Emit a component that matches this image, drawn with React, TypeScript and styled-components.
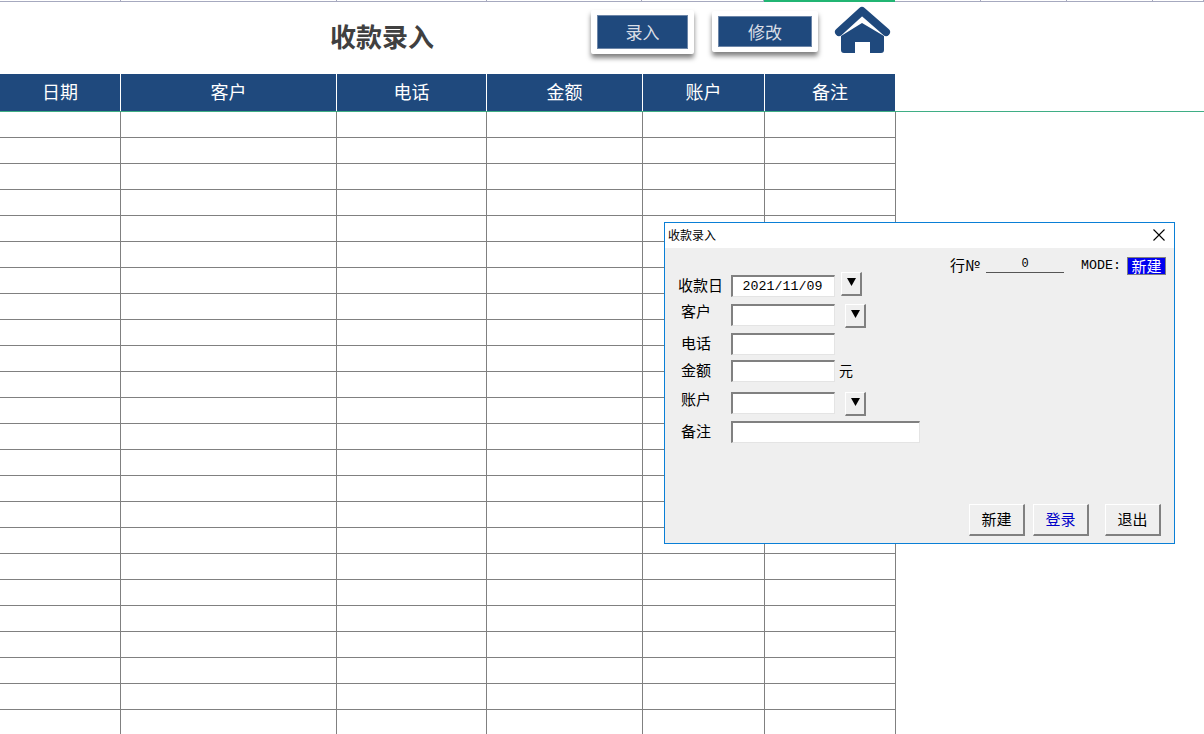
import styled, { createGlobalStyle } from "styled-components";

const UI_FONT = `"Noto Sans CJK SC", "Liberation Sans", sans-serif`;
const MONO_FONT = `"Liberation Mono", "Noto Sans CJK SC", monospace`;

const columns = [
    { title: "日期", width: 121 },
    { title: "客户", width: 216 },
    { title: "电话", width: 150 },
    { title: "金额", width: 156 },
    { title: "账户", width: 122 },
    { title: "备注", width: 131 },
];
const stripExtra = [86, 86, 86, 51];
const rowCount = 24;

const GlobalStyle = createGlobalStyle`
    html, body {
        margin: 0;
        padding: 0;
        background: #fff;
        overflow: hidden;
    }
`;

function HomeIcon() {
    return (
        <svg width="60" height="50" viewBox="0 0 60 50" fill="#1f497d">
            <path d="M7 27 L30 6 L54 27" fill="none" stroke="#1f497d" strokeWidth="8" strokeLinecap="round" strokeLinejoin="round" />
            <path d="M9 31 L30 18 L52 31 V45 Q52 48 49 48 H38 V37 H23 V48 H12 Q9 48 9 45 Z" />
        </svg>
    );
}

function DropButton() {
    return (
        <Arrow>
            <svg width="9" height="8" viewBox="0 0 9 8">
                <path d="M0 0 H9 L4.5 8 Z" fill="#000" />
            </svg>
        </Arrow>
    );
}

export default function App() {
    return (
        <Page>
            <GlobalStyle />
            <TopStrip>
                {columns.map((col) => (
                    <StripCell key={col.title} $width={col.width} $active={col.title === "备注"} />
                ))}
                {stripExtra.map((w, i) => (
                    <StripCell key={i} $width={w} />
                ))}
            </TopStrip>

            <TitleBar>
                <PageTitle>收款录入</PageTitle>
                <ShadowButton $width={103} $height={44} $margin={158} $top={8}>录入</ShadowButton>
                <ShadowButton $width={106} $height={41} $margin={18} $top={9}>修改</ShadowButton>
                <HomeLink><HomeIcon /></HomeLink>
            </TitleBar>

            <HeaderRow>
                {columns.map((col) => (
                    <HeaderCell key={col.title} $width={col.width}>{col.title}</HeaderCell>
                ))}
            </HeaderRow>

            {Array.from({ length: rowCount }).map((_, i) => (
                <DataRow key={i}>
                    {columns.map((col) => (
                        <DataCell key={col.title} $width={col.width} />
                    ))}
                </DataRow>
            ))}

            <Dialog>
                <DialogTitle>
                    <span>收款录入</span>
                    <svg width="12" height="12" viewBox="0 0 12 12">
                        <path d="M0.5 0.5 L11.5 11.5 M11.5 0.5 L0.5 11.5" stroke="#000" strokeWidth="1.1" />
                    </svg>
                </DialogTitle>
                <DialogBody>
                    <StatusRow>
                        <StatusLabel>行№</StatusLabel>
                        <RowNumber>0</RowNumber>
                        <ModeLabel>MODE:</ModeLabel>
                        <ModeBadge>新建</ModeBadge>
                    </StatusRow>

                    <FormRow>
                        <FieldLabel $indent={0} $top={2}>收款日</FieldLabel>
                        <Field $mt={3} $width={104}>2021/11/09</Field>
                        <ArrowSlot $ml={6}><DropButton /></ArrowSlot>
                    </FormRow>
                    <FormRow $mt={7}>
                        <FieldLabel $indent={3} $top={-4}>客户</FieldLabel>
                        <Field $width={104} />
                        <ArrowSlot $ml={10}><DropButton /></ArrowSlot>
                    </FormRow>
                    <FormRow $mt={5}>
                        <FieldLabel $indent={3} $top={-1}>电话</FieldLabel>
                        <Field $width={104} />
                    </FormRow>
                    <FormRow $mt={5}>
                        <FieldLabel $indent={3} $top={-1}>金额</FieldLabel>
                        <Field $width={104} />
                        <Unit>元</Unit>
                    </FormRow>
                    <FormRow $mt={10}>
                        <FieldLabel $indent={3} $top={-4}>账户</FieldLabel>
                        <Field $width={104} />
                        <ArrowSlot $ml={10}><DropButton /></ArrowSlot>
                    </FormRow>
                    <FormRow $mt={5}>
                        <FieldLabel $indent={3} $top={-1}>备注</FieldLabel>
                        <Field $width={189} />
                    </FormRow>

                    <DialogFooter>
                        <BevelButton>新建</BevelButton>
                        <BevelButton $blue>登录</BevelButton>
                        <BevelButton $ml={8}>退出</BevelButton>
                    </DialogFooter>
                </DialogBody>
            </Dialog>
        </Page>
    );
}

const Page = styled.div`
    position: relative;
    width: 1204px;
    height: 734px;
    overflow: hidden;
    background: #fff;
    font-family: ${UI_FONT};
`;

const TopStrip = styled.div`
    display: flex;
    height: 2px;
`;

const StripCell = styled.div<{ $width: number; $active?: boolean }>`
    box-sizing: border-box;
    width: ${({ $width }) => $width}px;
    height: 2px;
    border-right: 1px solid ${({ $active }) => ($active ? "#21b573" : "#a6a9bf")};
    background: ${({ $active }) =>
        $active ? "#21b573" : "linear-gradient(transparent 1px, #a6a9bf 1px)"};
`;

const TitleBar = styled.div`
    display: flex;
    align-items: flex-start;
    height: 72px;
    box-sizing: border-box;
    padding: 0 0 0 330px;
`;

const PageTitle = styled.h1`
    margin: 17px 0 0;
    width: 103px;
    font-size: 26px;
    line-height: 34px;
    font-weight: 700;
    color: #404040;
    white-space: nowrap;
`;

const ShadowButton = styled.button<{ $width: number; $height: number; $margin: number; $top: number }>`
    box-sizing: border-box;
    width: ${({ $width }) => $width}px;
    height: ${({ $height }) => $height}px;
    margin: ${({ $top }) => $top}px 0 0 ${({ $margin }) => $margin}px;
    padding: 0 0 1px;
    border-style: solid;
    border-color: #fff;
    border-width: 5px 6px;
    border-radius: 2px;
    background: #1f497d;
    box-shadow: inset 0 0 0 1px #6d86a8, 0 4px 5px rgba(0, 0, 0, 0.5);
    color: #d9dee6;
    font-family: ${UI_FONT};
    font-size: 17px;
    line-height: 1;
`;

const HomeLink = styled.div`
    margin: 3px 0 0 14px;
    line-height: 0;
`;

const HeaderRow = styled.div`
    display: flex;
    box-sizing: border-box;
    height: 38px;
    border-bottom: 1px solid #3fae85;
`;

const HeaderCell = styled.div<{ $width: number }>`
    box-sizing: border-box;
    width: ${({ $width }) => $width}px;
    display: flex;
    align-items: center;
    justify-content: center;
    padding-bottom: 4px;
    background: #1f497d;
    border-right: 1px solid #fff;
    color: #fff;
    font-size: 18px;
`;

const DataRow = styled.div`
    display: flex;
    height: 26px;
`;

const DataCell = styled.div<{ $width: number }>`
    box-sizing: border-box;
    width: ${({ $width }) => $width}px;
    border-right: 1px solid #808080;
    border-bottom: 1px solid #808080;
`;

const Dialog = styled.section`
    position: absolute;
    left: 664px;
    top: 222px;
    box-sizing: border-box;
    width: 511px;
    height: 322px;
    display: flex;
    flex-direction: column;
    border: 1px solid #0a7fd6;
    background: #fff;
`;

const DialogTitle = styled.header`
    display: flex;
    align-items: center;
    justify-content: space-between;
    box-sizing: border-box;
    height: 25px;
    padding: 0 9px 2px 3px;
    font-size: 12px;
    color: #000;
`;

const DialogBody = styled.div`
    flex: 1;
    display: flex;
    flex-direction: column;
    background: #efefef;
    padding: 0 13px 7px 13px;
`;

const StatusRow = styled.div`
    display: flex;
    align-items: flex-start;
    justify-content: flex-end;
    height: 24px;
    padding: 9px 0 0;
    box-sizing: border-box;
    margin-right: -5px;
`;

const StatusLabel = styled.span`
    font-size: 15px;
    line-height: 16px;
    color: #000;
    font-feature-settings: "fwid";
`;

const RowNumber = styled.span`
    box-sizing: border-box;
    width: 78px;
    height: 16px;
    margin-left: 6px;
    border-bottom: 1px solid #555;
    text-align: center;
    font-family: ${MONO_FONT};
    font-size: 12px;
    line-height: 15px;
    color: #000;
`;

const ModeLabel = styled.span`
    margin-left: 17px;
    width: 46px;
    font-family: ${MONO_FONT};
    font-size: 13.3px;
    line-height: 18px;
    color: #000;
`;

const ModeBadge = styled.span`
    box-sizing: border-box;
    width: 39px;
    height: 18px;
    border: 1px solid #808080;
    background: #0000f0;
    color: #fff;
    text-align: center;
    font-size: 15px;
    line-height: 15px;
`;

const FormRow = styled.div<{ $mt?: number }>`
    display: flex;
    align-items: flex-start;
    margin-top: ${({ $mt }) => $mt ?? 0}px;
`;

const FieldLabel = styled.label<{ $indent: number; $top: number }>`
    box-sizing: border-box;
    width: 53px;
    height: 22px;
    padding-left: ${({ $indent }) => $indent}px;
    margin-top: ${({ $top }) => $top}px;
    margin-bottom: ${({ $top }) => -$top}px;
    font-size: 15px;
    line-height: 22px;
    color: #000;
    white-space: nowrap;
`;

const Field = styled.div<{ $width: number; $mt?: number }>`
    box-sizing: border-box;
    width: ${({ $width }) => $width}px;
    height: 22px;
    margin-top: ${({ $mt }) => $mt ?? 0}px;
    padding-right: 2px;
    border-style: solid;
    border-width: 2px 1px 1px 2px;
    border-color: #808080 #e4e4e4 #e4e4e4 #808080;
    background: #fff;
    text-align: center;
    font-family: ${MONO_FONT};
    font-size: 13.3px;
    line-height: 20px;
    color: #000;
`;

const ArrowSlot = styled.div<{ $ml: number }>`
    margin-left: ${({ $ml }) => $ml}px;
`;

const Arrow = styled.button`
    box-sizing: border-box;
    display: flex;
    align-items: center;
    justify-content: center;
    width: 21px;
    height: 24px;
    padding: 0 0 3px;
    border-style: solid;
    border-width: 1px 2px 2px 1px;
    border-color: #fff #808080 #808080 #fff;
    background: #efefef;
`;

const Unit = styled.span`
    margin-left: 4px;
    font-size: 14px;
    line-height: 20px;
    color: #000;
`;

const DialogFooter = styled.footer`
    margin-top: auto;
    display: flex;
    justify-content: flex-end;
    gap: 8px;
`;

const BevelButton = styled.button<{ $blue?: boolean; $ml?: number }>`
    box-sizing: border-box;
    width: 56px;
    height: 32px;
    margin-left: ${({ $ml }) => $ml ?? 0}px;
    padding: 0 0 2px;
    border-style: solid;
    border-width: 1px 2px 2px 1px;
    border-color: #fff #808080 #808080 #fff;
    background: #efefef;
    color: ${({ $blue }) => ($blue ? "#0000c8" : "#000")};
    font-family: ${UI_FONT};
    font-size: 15px;
`;
